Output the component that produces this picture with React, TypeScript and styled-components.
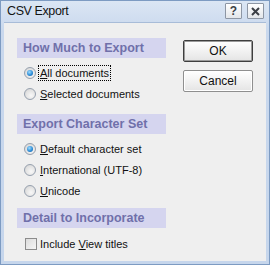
import styled, { createGlobalStyle } from "styled-components";

const GlobalStyle = createGlobalStyle`
  html, body {
    margin: 0;
    padding: 0;
    background: #ffffff;
  }
  body {
    font-family: "Liberation Sans", Arial, sans-serif;
  }
`;

const Window = styled.div`
  width: 270px;
  height: 265px;
  box-sizing: border-box;
  border: 1px solid #7d9bc2;
  background: linear-gradient(#dbe6f4, #c9d8ed 30px, #c6d6ec);
  padding: 0 3px 3px;
  display: flex;
  flex-direction: column;
`;

const TitleBar = styled.div`
  height: 20px;
  display: flex;
  align-items: center;
  padding: 0 2px 1px 3px;
  border-bottom: 1px solid #a8bcd8;
`;

const Title = styled.div`
  flex: 1;
  font-size: 12.5px;
  letter-spacing: -0.4px;
  color: #141414;
`;

const CaptionButton = styled.div`
  width: 17px;
  height: 16px;
  box-sizing: border-box;
  margin-left: 5px;
  border: 1px solid #8d96a4;
  border-radius: 1px;
  background: linear-gradient(#ffffff, #e3e6ea);
  display: flex;
  align-items: center;
  justify-content: center;
  font-size: 12px;
  font-weight: bold;
  color: #3b3f46;
`;

const Body = styled.div`
  flex: 1;
  background: #efefef;
  display: flex;
  padding: 15px 13px 0 13px;
`;

const Groups = styled.div`
  width: 149px;
  display: flex;
  flex-direction: column;
`;

const Band = styled.div<{ $gap?: number }>`
  height: 20px;
  line-height: 20px;
  margin-top: ${(p) => p.$gap ?? 0}px;
  margin-bottom: 4px;
  padding-left: 6px;
  background: #d5d5ef;
  color: #7070aa;
  font-size: 12.5px;
  font-weight: bold;
  white-space: nowrap;
`;

const Option = styled.div<{ $gap?: number }>`
  height: 21px;
  margin-top: ${(p) => p.$gap ?? 0}px;
  display: flex;
  align-items: center;
  padding-left: 7px;
  font-size: 11px;
  color: #111111;
  white-space: nowrap;
`;

const Radio = styled.span`
  width: 12px;
  height: 12px;
  box-sizing: border-box;
  border-radius: 50%;
  border: 1px solid #96a0ae;
  background: radial-gradient(circle at 60% 65%, #f8f8f8 0%, #e1e1e1 60%, #cfcfcf 100%);
  display: flex;
  align-items: center;
  justify-content: center;
  flex: none;
  margin-right: 4px;
`;

const Dot = styled.span`
  width: 6px;
  height: 6px;
  border-radius: 50%;
  background: radial-gradient(circle at 40% 35%, #9fdcff 0%, #2f8fd8 55%, #0c4f98 100%);
`;

const Check = styled.span`
  width: 12px;
  height: 12px;
  box-sizing: border-box;
  border: 1px solid #8c8c8c;
  background: linear-gradient(135deg, #dcdcdc, #f6f6f6);
  flex: none;
  margin: 0 3px 0 1px;
`;

const Label = styled.span<{ $focus?: boolean }>`
  padding: 1px 1px;
  margin-left: -2px;
  border: 1px dotted ${(p) => (p.$focus ? "#000000" : "transparent")};
`;

const Buttons = styled.div`
  margin-left: 17px;
  padding-top: 2px;
  display: flex;
  flex-direction: column;
  gap: 8px;
`;

const Button = styled.button<{ $default?: boolean }>`
  width: 70px;
  height: 22px;
  box-sizing: border-box;
  padding: 0;
  border: 1px solid ${(p) => (p.$default ? "#3e3e3e" : "#8f8f8f")};
  border-radius: 2px;
  box-shadow: ${(p) =>
    p.$default ? "inset 0 0 0 1px #9a9a9a" : "inset 0 0 0 1px #ffffff"};
  background: linear-gradient(#ffffff, #f2f2f2 50%, #e4e4e4);
  font-family: "Liberation Sans", Arial, sans-serif;
  font-size: 12px;
  color: #111111;
`;

function App() {
  return (
    <>
      <GlobalStyle />
      <Window>
        <TitleBar>
          <Title>CSV Export</Title>
          <CaptionButton>?</CaptionButton>
          <CaptionButton>
            <svg width="9" height="9" viewBox="0 0 9 9">
              <path d="M1 1 L8 8 M8 1 L1 8" stroke="#3b3f46" strokeWidth="2" />
            </svg>
          </CaptionButton>
        </TitleBar>
        <Body>
          <Groups>
            <Band>How Much to Export</Band>
            <Option>
              <Radio>
                <Dot />
              </Radio>
              <Label $focus>
                <u>A</u>ll documents
              </Label>
            </Option>
            <Option>
              <Radio />
              <Label>
                <u>S</u>elected documents
              </Label>
            </Option>
            <Band $gap={10}>Export Character Set</Band>
            <Option>
              <Radio>
                <Dot />
              </Radio>
              <Label>
                <u>D</u>efault character set
              </Label>
            </Option>
            <Option>
              <Radio />
              <Label>
                <u>I</u>nternational (UTF-8)
              </Label>
            </Option>
            <Option>
              <Radio />
              <Label>
                <u>U</u>nicode
              </Label>
            </Option>
            <Band $gap={7}>Detail to Incorporate</Band>
            <Option $gap={1}>
              <Check />
              <Label>
                Include <u>V</u>iew titles
              </Label>
            </Option>
          </Groups>
          <Buttons>
            <Button $default>OK</Button>
            <Button>Cancel</Button>
          </Buttons>
        </Body>
      </Window>
    </>
  );
}

export default App;
